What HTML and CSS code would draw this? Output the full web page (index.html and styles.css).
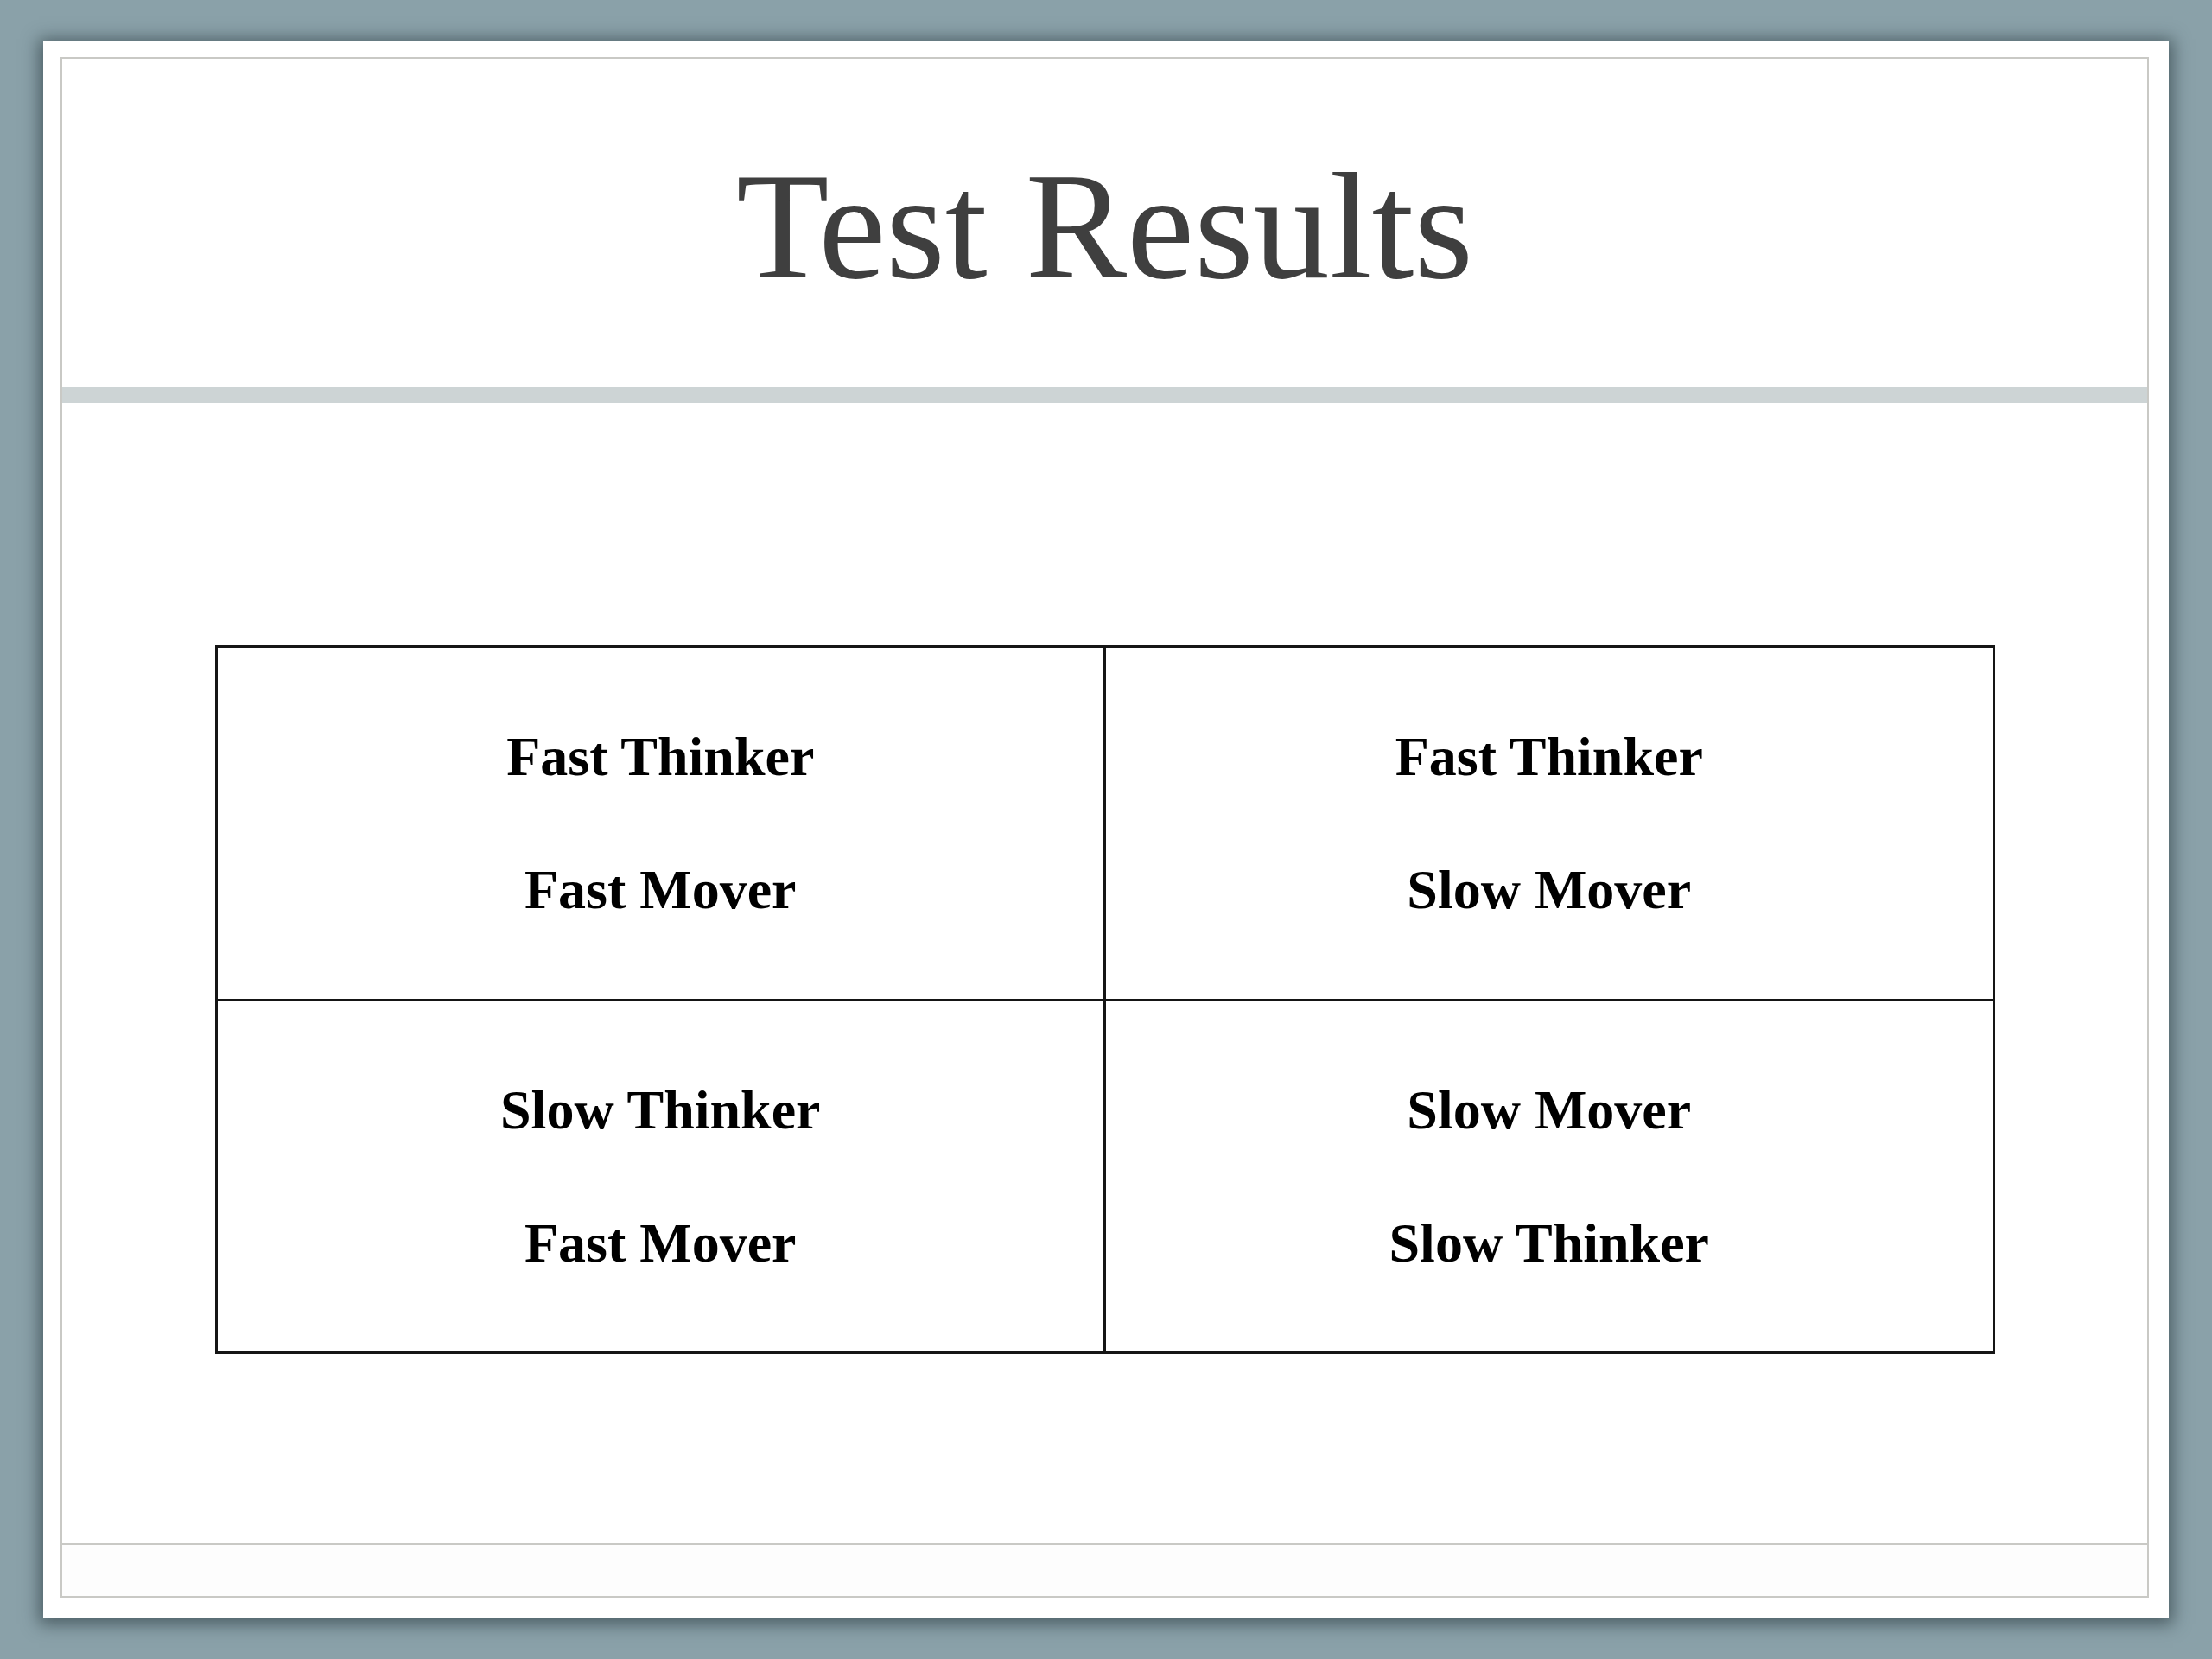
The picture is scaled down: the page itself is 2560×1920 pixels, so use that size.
FILE: index.html
```html
<!DOCTYPE html>
<html>
<head>
<meta charset="utf-8">
<link rel="stylesheet" href="styles.css">
</head>
<body>
<div class="slide">
  <div class="frame">
    <header class="header"><h1 class="title">Test Results</h1></header>
    <div class="bar"></div>
    <main class="content">
      <div class="grid">
        <div class="cell"><div class="line">Fast Thinker</div><div class="line">Fast Mover</div></div>
        <div class="cell"><div class="line">Fast Thinker</div><div class="line">Slow Mover</div></div>
        <div class="cell"><div class="line">Slow Thinker</div><div class="line">Fast Mover</div></div>
        <div class="cell"><div class="line">Slow Mover</div><div class="line">Slow Thinker</div></div>
      </div>
    </main>
    <footer class="footer"></footer>
  </div>
</div>
</body>
</html>
```

FILE: styles.css
```css
html, body {
  margin: 0;
  padding: 0;
}
body {
  width: 2560px;
  height: 1920px;
  background: #8aa1a9;
  overflow: hidden;
}
.slide {
  box-sizing: border-box;
  width: 2460px;
  height: 1825px;
  margin: 47px 0 0 50px;
  background: #ffffff;
  box-shadow: 0 3px 18px 5px rgba(25, 40, 45, 0.55);
  padding: 19px 0 0 20px;
}
.frame {
  box-sizing: border-box;
  width: 2417px;
  height: 1783px;
  border: 2px solid #c9c9c5;
  display: flex;
  flex-direction: column;
}
.header {
  height: 380px;
  display: flex;
  align-items: center;
  justify-content: center;
}
.title {
  margin: 0;
  font-family: "Liberation Serif", "Times New Roman", serif;
  font-weight: normal;
  font-size: 176px;
  line-height: 1;
  color: #3f3f3f;
  padding-top: 8px;
}
.bar {
  height: 18px;
  background: #cdd4d5;
}
.content {
  box-sizing: border-box;
  height: 1320px;
  padding-top: 281px;
  display: flex;
  justify-content: center;
  align-items: flex-start;
}
.grid {
  width: 2060px;
  height: 820px;
  box-sizing: border-box;
  border: 3px solid #151515;
  background: #151515;
  display: grid;
  grid-template-columns: 1fr 1fr;
  grid-template-rows: 1fr 1fr;
  gap: 3px;
}
.cell {
  background: #ffffff;
  display: flex;
  flex-direction: column;
  align-items: center;
  justify-content: center;
  gap: 77px;
  font-family: "Liberation Serif", "Times New Roman", serif;
  font-weight: bold;
  font-size: 64px;
  color: #000000;
}
.line {
  line-height: 77px;
}
.footer {
  flex: 1;
  border-top: 2px solid #c9c9c5;
  background: #fdfdfd;
}
```
